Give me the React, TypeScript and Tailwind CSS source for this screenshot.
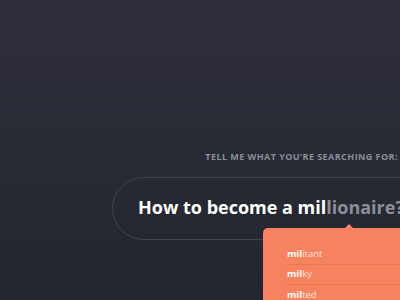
import React from 'react';

const suggestions = [
  { typed: 'mil', rest: 'itant' },
  { typed: 'mil', rest: 'ky' },
  { typed: 'mil', rest: 'ted' },
];

export default function App() {
  return (
    <div
      className="relative w-[400px] h-[300px] overflow-hidden bg-gradient-to-b from-[#2f2f3b] to-[#22262e]"
      style={{ fontFamily: '"Open Sans", "Noto Sans", sans-serif' }}
    >
      {/* Label */}
      <div className="pt-[147px] pr-[2px] text-right leading-[14px]">
        <span className="text-[9px] font-bold tracking-[0.45px] text-[#8b8e99] whitespace-nowrap">
          TELL ME WHAT YOU’RE SEARCHING FOR:
        </span>
      </div>

      {/* Search pill */}
      <div className="relative ml-[112px] mt-[13px]">
        <div className="w-[340px] h-[63px] rounded-full border border-[#424550] flex items-center pl-[25px] pb-[3px]">
          <span className="text-[18px] font-bold text-white whitespace-nowrap leading-none">
            How to become a mil<span className="text-[#8d8f98]">lionaire?</span>
          </span>
        </div>

        {/* Suggestions dropdown */}
        <div className="absolute left-[151px] top-[51px] w-[200px]">
          <div className="absolute left-[82px] -top-[4px] w-0 h-0 border-l-[4px] border-r-[4px] border-b-[4px] border-l-transparent border-r-transparent border-b-[#f7825f]" />
          <div className="bg-[#f7825f] rounded-tl-[5px] pt-[17px] pl-[24px] h-[80px]">
            {suggestions.map((s, i) => (
              <div
                key={i}
                className={`h-[20px] flex items-center text-[9.5px] whitespace-nowrap ${
                  i < suggestions.length - 1 ? 'border-b border-[#e6764f]' : ''
                }`}
              >
                <span className="font-bold text-white">{s.typed}</span>
                <span className="text-[#fde3d8]">{s.rest}</span>
              </div>
            ))}
          </div>
        </div>
      </div>
    </div>
  );
}
